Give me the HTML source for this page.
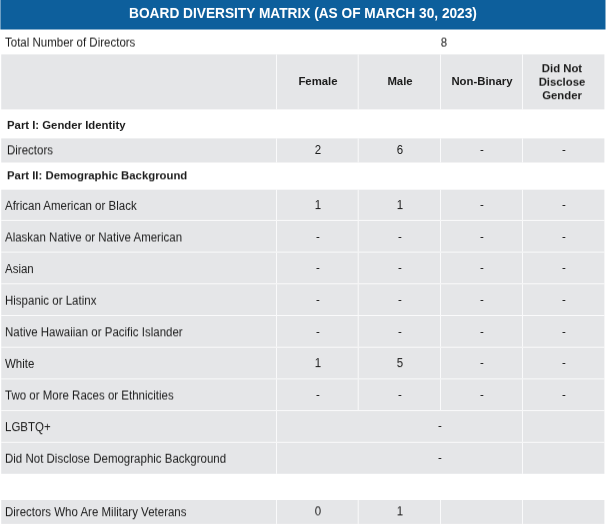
<!DOCTYPE html>
<html><head><meta charset="utf-8"><style>
html,body{margin:0;padding:0;background:#fff;}
body{width:606px;height:526px;position:relative;overflow:hidden;font-family:"Liberation Sans",sans-serif;}
.r{position:absolute;}
.t{position:absolute;white-space:nowrap;line-height:1.117;will-change:transform;}
</style></head><body>
<div class="r" style="left:1px;top:0px;width:604px;height:29px;background:rgba(13,95,156,1.000)"></div>
<div class="r" style="left:0px;top:0px;width:1px;height:29px;background:rgba(13,95,156,0.600)"></div>
<div class="r" style="left:605px;top:0px;width:1px;height:29px;background:rgba(13,95,156,0.500)"></div>
<div class="r" style="left:1px;top:29px;width:604px;height:1px;background:rgba(13,95,156,0.500)"></div>
<div class="r" style="left:0px;top:29px;width:1px;height:1px;background:rgba(13,95,156,0.300)"></div>
<div class="r" style="left:605px;top:29px;width:1px;height:1px;background:rgba(13,95,156,0.250)"></div>
<div class="t" style="top:5px;left:53px;font-size:13.7px;color:#ffffff;font-weight:bold;width:500px;text-align:center;transform:translate(0px,0.602px) rotate(0.01deg) scaleY(1.13);transform-origin:50% 12.4px;">BOARD DIVERSITY MATRIX (AS OF MARCH 30, 2023)</div>
<div class="t" style="top:35px;left:5px;font-size:11.5px;color:#1a1a1a;transform:translate(0px,0.693px) rotate(0.01deg) scaleY(1.05);transform-origin:0 2.17px;">Total Number of Directors</div>
<div class="t" style="top:35px;left:424px;font-size:11.5px;color:#1a1a1a;width:40px;text-align:center;transform:translate(0px,0.693px) rotate(0.01deg) scaleY(1.05);transform-origin:0 2.17px;">8</div>
<div class="r" style="left:2px;top:55px;width:602px;height:54px;background:rgba(229,230,232,1.000)"></div>
<div class="r" style="left:1px;top:55px;width:1px;height:54px;background:rgba(229,230,232,0.800)"></div>
<div class="r" style="left:604px;top:55px;width:1px;height:54px;background:rgba(229,230,232,0.400)"></div>
<div class="r" style="left:2px;top:54px;width:602px;height:1px;background:rgba(229,230,232,0.600)"></div>
<div class="r" style="left:2px;top:109px;width:602px;height:1px;background:rgba(229,230,232,0.400)"></div>
<div class="r" style="left:1px;top:54px;width:1px;height:1px;background:rgba(229,230,232,0.480)"></div>
<div class="r" style="left:604px;top:54px;width:1px;height:1px;background:rgba(229,230,232,0.240)"></div>
<div class="r" style="left:1px;top:109px;width:1px;height:1px;background:rgba(229,230,232,0.320)"></div>
<div class="r" style="left:604px;top:109px;width:1px;height:1px;background:rgba(229,230,232,0.160)"></div>
<div class="r" style="left:276px;top:55px;width:1px;height:54px;background:rgba(255,255,255,0.800)"></div>
<div class="r" style="left:276px;top:54px;width:1px;height:1px;background:rgba(255,255,255,0.480)"></div>
<div class="r" style="left:276px;top:109px;width:1px;height:1px;background:rgba(255,255,255,0.320)"></div>
<div class="r" style="left:357px;top:55px;width:1px;height:54px;background:rgba(255,255,255,0.240)"></div>
<div class="r" style="left:358px;top:55px;width:1px;height:54px;background:rgba(255,255,255,0.560)"></div>
<div class="r" style="left:357px;top:54px;width:1px;height:1px;background:rgba(255,255,255,0.144)"></div>
<div class="r" style="left:358px;top:54px;width:1px;height:1px;background:rgba(255,255,255,0.336)"></div>
<div class="r" style="left:357px;top:109px;width:1px;height:1px;background:rgba(255,255,255,0.096)"></div>
<div class="r" style="left:358px;top:109px;width:1px;height:1px;background:rgba(255,255,255,0.224)"></div>
<div class="r" style="left:440px;top:55px;width:1px;height:54px;background:rgba(255,255,255,0.800)"></div>
<div class="r" style="left:440px;top:54px;width:1px;height:1px;background:rgba(255,255,255,0.480)"></div>
<div class="r" style="left:440px;top:109px;width:1px;height:1px;background:rgba(255,255,255,0.320)"></div>
<div class="r" style="left:522px;top:55px;width:1px;height:54px;background:rgba(255,255,255,0.800)"></div>
<div class="r" style="left:522px;top:54px;width:1px;height:1px;background:rgba(255,255,255,0.480)"></div>
<div class="r" style="left:522px;top:109px;width:1px;height:1px;background:rgba(255,255,255,0.320)"></div>
<div class="t" style="top:75px;left:278px;font-size:11.35px;color:#1a1a1a;font-weight:bold;width:80px;text-align:center;transform:translate(0px,0.028px) rotate(0.01deg) ;">Female</div>
<div class="t" style="top:75px;left:360px;font-size:11.35px;color:#1a1a1a;font-weight:bold;width:80px;text-align:center;transform:translate(0px,0.028px) rotate(0.01deg) ;">Male</div>
<div class="t" style="top:75px;left:442px;font-size:11.35px;color:#1a1a1a;font-weight:bold;width:80px;text-align:center;transform:translate(0px,0.028px) rotate(0.01deg) ;">Non-Binary</div>
<div class="t" style="top:62px;left:522px;font-size:11.35px;color:#1a1a1a;font-weight:bold;width:80px;text-align:center;transform:translate(0px,0.228px) rotate(0.01deg) ;">Did Not</div>
<div class="t" style="top:75px;left:522px;font-size:11.35px;color:#1a1a1a;font-weight:bold;width:80px;text-align:center;transform:translate(0px,0.728px) rotate(0.01deg) ;">Disclose</div>
<div class="t" style="top:89px;left:522px;font-size:11.35px;color:#1a1a1a;font-weight:bold;width:80px;text-align:center;transform:translate(0px,0.228px) rotate(0.01deg) ;">Gender</div>
<div class="t" style="top:118px;left:7px;font-size:11.35px;color:#1a1a1a;font-weight:bold;transform:translate(0px,0.928px) rotate(0.01deg) ;">Part I: Gender Identity</div>
<div class="r" style="left:2px;top:139px;width:602px;height:23px;background:rgba(229,230,232,1.000)"></div>
<div class="r" style="left:1px;top:139px;width:1px;height:23px;background:rgba(229,230,232,0.800)"></div>
<div class="r" style="left:604px;top:139px;width:1px;height:23px;background:rgba(229,230,232,0.400)"></div>
<div class="r" style="left:2px;top:138px;width:602px;height:1px;background:rgba(229,230,232,0.600)"></div>
<div class="r" style="left:2px;top:162px;width:602px;height:1px;background:rgba(229,230,232,0.500)"></div>
<div class="r" style="left:1px;top:138px;width:1px;height:1px;background:rgba(229,230,232,0.480)"></div>
<div class="r" style="left:604px;top:138px;width:1px;height:1px;background:rgba(229,230,232,0.240)"></div>
<div class="r" style="left:1px;top:162px;width:1px;height:1px;background:rgba(229,230,232,0.400)"></div>
<div class="r" style="left:604px;top:162px;width:1px;height:1px;background:rgba(229,230,232,0.200)"></div>
<div class="r" style="left:276px;top:139px;width:1px;height:23px;background:rgba(255,255,255,0.800)"></div>
<div class="r" style="left:276px;top:138px;width:1px;height:1px;background:rgba(255,255,255,0.480)"></div>
<div class="r" style="left:276px;top:162px;width:1px;height:1px;background:rgba(255,255,255,0.400)"></div>
<div class="r" style="left:357px;top:139px;width:1px;height:23px;background:rgba(255,255,255,0.240)"></div>
<div class="r" style="left:358px;top:139px;width:1px;height:23px;background:rgba(255,255,255,0.560)"></div>
<div class="r" style="left:357px;top:138px;width:1px;height:1px;background:rgba(255,255,255,0.144)"></div>
<div class="r" style="left:358px;top:138px;width:1px;height:1px;background:rgba(255,255,255,0.336)"></div>
<div class="r" style="left:357px;top:162px;width:1px;height:1px;background:rgba(255,255,255,0.120)"></div>
<div class="r" style="left:358px;top:162px;width:1px;height:1px;background:rgba(255,255,255,0.280)"></div>
<div class="r" style="left:440px;top:139px;width:1px;height:23px;background:rgba(255,255,255,0.800)"></div>
<div class="r" style="left:440px;top:138px;width:1px;height:1px;background:rgba(255,255,255,0.480)"></div>
<div class="r" style="left:440px;top:162px;width:1px;height:1px;background:rgba(255,255,255,0.400)"></div>
<div class="r" style="left:522px;top:139px;width:1px;height:23px;background:rgba(255,255,255,0.800)"></div>
<div class="r" style="left:522px;top:138px;width:1px;height:1px;background:rgba(255,255,255,0.480)"></div>
<div class="r" style="left:522px;top:162px;width:1px;height:1px;background:rgba(255,255,255,0.400)"></div>
<div class="t" style="top:143px;left:7px;font-size:11.5px;color:#1a1a1a;transform:translate(0px,0.492px) rotate(0.01deg) scaleY(1.05);transform-origin:0 2.17px;">Directors</div>
<div class="t" style="top:143px;left:288px;font-size:11.5px;color:#1a1a1a;width:60px;text-align:center;transform:translate(0px,0.092px) rotate(0.01deg) scaleY(1.05);transform-origin:0 2.17px;">2</div>
<div class="t" style="top:143px;left:370px;font-size:11.5px;color:#1a1a1a;width:60px;text-align:center;transform:translate(0px,0.092px) rotate(0.01deg) scaleY(1.05);transform-origin:0 2.17px;">6</div>
<div class="t" style="top:143px;left:452px;font-size:11.5px;color:#000000;width:60px;text-align:center;transform:translateZ(0);">-</div>
<div class="t" style="top:143px;left:534px;font-size:11.5px;color:#000000;width:60px;text-align:center;transform:translateZ(0);">-</div>
<div class="t" style="top:169px;left:7px;font-size:11.35px;color:#1a1a1a;font-weight:bold;transform:translate(0px,0.328px) rotate(0.01deg) ;">Part II: Demographic Background</div>
<div class="r" style="left:2px;top:190px;width:602px;height:283px;background:rgba(229,230,232,1.000)"></div>
<div class="r" style="left:1px;top:190px;width:1px;height:283px;background:rgba(229,230,232,0.800)"></div>
<div class="r" style="left:604px;top:190px;width:1px;height:283px;background:rgba(229,230,232,0.400)"></div>
<div class="r" style="left:2px;top:189px;width:602px;height:1px;background:rgba(229,230,232,0.300)"></div>
<div class="r" style="left:2px;top:473px;width:602px;height:1px;background:rgba(229,230,232,0.800)"></div>
<div class="r" style="left:1px;top:189px;width:1px;height:1px;background:rgba(229,230,232,0.240)"></div>
<div class="r" style="left:604px;top:189px;width:1px;height:1px;background:rgba(229,230,232,0.120)"></div>
<div class="r" style="left:1px;top:473px;width:1px;height:1px;background:rgba(229,230,232,0.640)"></div>
<div class="r" style="left:604px;top:473px;width:1px;height:1px;background:rgba(229,230,232,0.320)"></div>
<div class="r" style="left:2px;top:219px;width:602px;height:1px;background:rgba(255,255,255,0.080)"></div>
<div class="r" style="left:2px;top:220px;width:602px;height:1px;background:rgba(255,255,255,0.720)"></div>
<div class="r" style="left:1px;top:219px;width:1px;height:1px;background:rgba(255,255,255,0.064)"></div>
<div class="r" style="left:604px;top:219px;width:1px;height:1px;background:rgba(255,255,255,0.032)"></div>
<div class="r" style="left:1px;top:220px;width:1px;height:1px;background:rgba(255,255,255,0.576)"></div>
<div class="r" style="left:604px;top:220px;width:1px;height:1px;background:rgba(255,255,255,0.288)"></div>
<div class="r" style="left:2px;top:251px;width:602px;height:1px;background:rgba(255,255,255,0.320)"></div>
<div class="r" style="left:2px;top:252px;width:602px;height:1px;background:rgba(255,255,255,0.480)"></div>
<div class="r" style="left:1px;top:251px;width:1px;height:1px;background:rgba(255,255,255,0.256)"></div>
<div class="r" style="left:604px;top:251px;width:1px;height:1px;background:rgba(255,255,255,0.128)"></div>
<div class="r" style="left:1px;top:252px;width:1px;height:1px;background:rgba(255,255,255,0.384)"></div>
<div class="r" style="left:604px;top:252px;width:1px;height:1px;background:rgba(255,255,255,0.192)"></div>
<div class="r" style="left:2px;top:283px;width:602px;height:1px;background:rgba(255,255,255,0.560)"></div>
<div class="r" style="left:2px;top:284px;width:602px;height:1px;background:rgba(255,255,255,0.240)"></div>
<div class="r" style="left:1px;top:283px;width:1px;height:1px;background:rgba(255,255,255,0.448)"></div>
<div class="r" style="left:604px;top:283px;width:1px;height:1px;background:rgba(255,255,255,0.224)"></div>
<div class="r" style="left:1px;top:284px;width:1px;height:1px;background:rgba(255,255,255,0.192)"></div>
<div class="r" style="left:604px;top:284px;width:1px;height:1px;background:rgba(255,255,255,0.096)"></div>
<div class="r" style="left:2px;top:315px;width:602px;height:1px;background:rgba(255,255,255,0.800)"></div>
<div class="r" style="left:1px;top:315px;width:1px;height:1px;background:rgba(255,255,255,0.640)"></div>
<div class="r" style="left:604px;top:315px;width:1px;height:1px;background:rgba(255,255,255,0.320)"></div>
<div class="r" style="left:2px;top:346px;width:602px;height:1px;background:rgba(255,255,255,0.240)"></div>
<div class="r" style="left:2px;top:347px;width:602px;height:1px;background:rgba(255,255,255,0.560)"></div>
<div class="r" style="left:1px;top:346px;width:1px;height:1px;background:rgba(255,255,255,0.192)"></div>
<div class="r" style="left:604px;top:346px;width:1px;height:1px;background:rgba(255,255,255,0.096)"></div>
<div class="r" style="left:1px;top:347px;width:1px;height:1px;background:rgba(255,255,255,0.448)"></div>
<div class="r" style="left:604px;top:347px;width:1px;height:1px;background:rgba(255,255,255,0.224)"></div>
<div class="r" style="left:2px;top:378px;width:602px;height:1px;background:rgba(255,255,255,0.480)"></div>
<div class="r" style="left:2px;top:379px;width:602px;height:1px;background:rgba(255,255,255,0.320)"></div>
<div class="r" style="left:1px;top:378px;width:1px;height:1px;background:rgba(255,255,255,0.384)"></div>
<div class="r" style="left:604px;top:378px;width:1px;height:1px;background:rgba(255,255,255,0.192)"></div>
<div class="r" style="left:1px;top:379px;width:1px;height:1px;background:rgba(255,255,255,0.256)"></div>
<div class="r" style="left:604px;top:379px;width:1px;height:1px;background:rgba(255,255,255,0.128)"></div>
<div class="r" style="left:2px;top:410px;width:602px;height:1px;background:rgba(255,255,255,0.720)"></div>
<div class="r" style="left:2px;top:411px;width:602px;height:1px;background:rgba(255,255,255,0.080)"></div>
<div class="r" style="left:1px;top:410px;width:1px;height:1px;background:rgba(255,255,255,0.576)"></div>
<div class="r" style="left:604px;top:410px;width:1px;height:1px;background:rgba(255,255,255,0.288)"></div>
<div class="r" style="left:1px;top:411px;width:1px;height:1px;background:rgba(255,255,255,0.064)"></div>
<div class="r" style="left:604px;top:411px;width:1px;height:1px;background:rgba(255,255,255,0.032)"></div>
<div class="r" style="left:2px;top:441px;width:602px;height:1px;background:rgba(255,255,255,0.160)"></div>
<div class="r" style="left:2px;top:442px;width:602px;height:1px;background:rgba(255,255,255,0.640)"></div>
<div class="r" style="left:1px;top:441px;width:1px;height:1px;background:rgba(255,255,255,0.128)"></div>
<div class="r" style="left:604px;top:441px;width:1px;height:1px;background:rgba(255,255,255,0.064)"></div>
<div class="r" style="left:1px;top:442px;width:1px;height:1px;background:rgba(255,255,255,0.512)"></div>
<div class="r" style="left:604px;top:442px;width:1px;height:1px;background:rgba(255,255,255,0.256)"></div>
<div class="r" style="left:276px;top:190px;width:1px;height:29px;background:rgba(255,255,255,0.800)"></div>
<div class="r" style="left:276px;top:189px;width:1px;height:1px;background:rgba(255,255,255,0.240)"></div>
<div class="r" style="left:276px;top:219px;width:1px;height:1px;background:rgba(255,255,255,0.720)"></div>
<div class="r" style="left:357px;top:190px;width:1px;height:29px;background:rgba(255,255,255,0.240)"></div>
<div class="r" style="left:358px;top:190px;width:1px;height:29px;background:rgba(255,255,255,0.560)"></div>
<div class="r" style="left:357px;top:189px;width:1px;height:1px;background:rgba(255,255,255,0.072)"></div>
<div class="r" style="left:358px;top:189px;width:1px;height:1px;background:rgba(255,255,255,0.168)"></div>
<div class="r" style="left:357px;top:219px;width:1px;height:1px;background:rgba(255,255,255,0.216)"></div>
<div class="r" style="left:358px;top:219px;width:1px;height:1px;background:rgba(255,255,255,0.504)"></div>
<div class="r" style="left:440px;top:190px;width:1px;height:29px;background:rgba(255,255,255,0.800)"></div>
<div class="r" style="left:440px;top:189px;width:1px;height:1px;background:rgba(255,255,255,0.240)"></div>
<div class="r" style="left:440px;top:219px;width:1px;height:1px;background:rgba(255,255,255,0.720)"></div>
<div class="r" style="left:522px;top:190px;width:1px;height:29px;background:rgba(255,255,255,0.800)"></div>
<div class="r" style="left:522px;top:189px;width:1px;height:1px;background:rgba(255,255,255,0.240)"></div>
<div class="r" style="left:522px;top:219px;width:1px;height:1px;background:rgba(255,255,255,0.720)"></div>
<div class="t" style="top:198px;left:5px;font-size:11.5px;color:#1a1a1a;transform:translate(0px,0.992px) rotate(0.01deg) scaleY(1.05);transform-origin:0 2.17px;">African American or Black</div>
<div class="t" style="top:198px;left:288px;font-size:11.5px;color:#1a1a1a;width:60px;text-align:center;transform:translate(0px,0.192px) rotate(0.01deg) scaleY(1.05);transform-origin:0 2.17px;">1</div>
<div class="t" style="top:198px;left:370px;font-size:11.5px;color:#1a1a1a;width:60px;text-align:center;transform:translate(0px,0.192px) rotate(0.01deg) scaleY(1.05);transform-origin:0 2.17px;">1</div>
<div class="t" style="top:198px;left:452px;font-size:11.5px;color:#000000;width:60px;text-align:center;transform:translateZ(0);">-</div>
<div class="t" style="top:198px;left:534px;font-size:11.5px;color:#000000;width:60px;text-align:center;transform:translateZ(0);">-</div>
<div class="r" style="left:276px;top:221px;width:1px;height:30px;background:rgba(255,255,255,0.800)"></div>
<div class="r" style="left:276px;top:220px;width:1px;height:1px;background:rgba(255,255,255,0.080)"></div>
<div class="r" style="left:276px;top:251px;width:1px;height:1px;background:rgba(255,255,255,0.480)"></div>
<div class="r" style="left:357px;top:221px;width:1px;height:30px;background:rgba(255,255,255,0.240)"></div>
<div class="r" style="left:358px;top:221px;width:1px;height:30px;background:rgba(255,255,255,0.560)"></div>
<div class="r" style="left:357px;top:220px;width:1px;height:1px;background:rgba(255,255,255,0.024)"></div>
<div class="r" style="left:358px;top:220px;width:1px;height:1px;background:rgba(255,255,255,0.056)"></div>
<div class="r" style="left:357px;top:251px;width:1px;height:1px;background:rgba(255,255,255,0.144)"></div>
<div class="r" style="left:358px;top:251px;width:1px;height:1px;background:rgba(255,255,255,0.336)"></div>
<div class="r" style="left:440px;top:221px;width:1px;height:30px;background:rgba(255,255,255,0.800)"></div>
<div class="r" style="left:440px;top:220px;width:1px;height:1px;background:rgba(255,255,255,0.080)"></div>
<div class="r" style="left:440px;top:251px;width:1px;height:1px;background:rgba(255,255,255,0.480)"></div>
<div class="r" style="left:522px;top:221px;width:1px;height:30px;background:rgba(255,255,255,0.800)"></div>
<div class="r" style="left:522px;top:220px;width:1px;height:1px;background:rgba(255,255,255,0.080)"></div>
<div class="r" style="left:522px;top:251px;width:1px;height:1px;background:rgba(255,255,255,0.480)"></div>
<div class="t" style="top:230px;left:5px;font-size:11.5px;color:#1a1a1a;transform:translate(0px,0.599px) rotate(0.01deg) scaleY(1.05);transform-origin:0 2.17px;">Alaskan Native or Native American</div>
<div class="t" style="top:230px;left:288px;font-size:11.5px;color:#000000;width:60px;text-align:center;transform:translateZ(0);">-</div>
<div class="t" style="top:230px;left:370px;font-size:11.5px;color:#000000;width:60px;text-align:center;transform:translateZ(0);">-</div>
<div class="t" style="top:230px;left:452px;font-size:11.5px;color:#000000;width:60px;text-align:center;transform:translateZ(0);">-</div>
<div class="t" style="top:230px;left:534px;font-size:11.5px;color:#000000;width:60px;text-align:center;transform:translateZ(0);">-</div>
<div class="r" style="left:276px;top:253px;width:1px;height:30px;background:rgba(255,255,255,0.800)"></div>
<div class="r" style="left:276px;top:252px;width:1px;height:1px;background:rgba(255,255,255,0.320)"></div>
<div class="r" style="left:276px;top:283px;width:1px;height:1px;background:rgba(255,255,255,0.240)"></div>
<div class="r" style="left:357px;top:253px;width:1px;height:30px;background:rgba(255,255,255,0.240)"></div>
<div class="r" style="left:358px;top:253px;width:1px;height:30px;background:rgba(255,255,255,0.560)"></div>
<div class="r" style="left:357px;top:252px;width:1px;height:1px;background:rgba(255,255,255,0.096)"></div>
<div class="r" style="left:358px;top:252px;width:1px;height:1px;background:rgba(255,255,255,0.224)"></div>
<div class="r" style="left:357px;top:283px;width:1px;height:1px;background:rgba(255,255,255,0.072)"></div>
<div class="r" style="left:358px;top:283px;width:1px;height:1px;background:rgba(255,255,255,0.168)"></div>
<div class="r" style="left:440px;top:253px;width:1px;height:30px;background:rgba(255,255,255,0.800)"></div>
<div class="r" style="left:440px;top:252px;width:1px;height:1px;background:rgba(255,255,255,0.320)"></div>
<div class="r" style="left:440px;top:283px;width:1px;height:1px;background:rgba(255,255,255,0.240)"></div>
<div class="r" style="left:522px;top:253px;width:1px;height:30px;background:rgba(255,255,255,0.800)"></div>
<div class="r" style="left:522px;top:252px;width:1px;height:1px;background:rgba(255,255,255,0.320)"></div>
<div class="r" style="left:522px;top:283px;width:1px;height:1px;background:rgba(255,255,255,0.240)"></div>
<div class="t" style="top:262px;left:5px;font-size:11.5px;color:#1a1a1a;transform:translate(0px,0.206px) rotate(0.01deg) scaleY(1.05);transform-origin:0 2.17px;">Asian</div>
<div class="t" style="top:261px;left:288px;font-size:11.5px;color:#000000;width:60px;text-align:center;transform:translateZ(0);">-</div>
<div class="t" style="top:261px;left:370px;font-size:11.5px;color:#000000;width:60px;text-align:center;transform:translateZ(0);">-</div>
<div class="t" style="top:261px;left:452px;font-size:11.5px;color:#000000;width:60px;text-align:center;transform:translateZ(0);">-</div>
<div class="t" style="top:261px;left:534px;font-size:11.5px;color:#000000;width:60px;text-align:center;transform:translateZ(0);">-</div>
<div class="r" style="left:276px;top:285px;width:1px;height:30px;background:rgba(255,255,255,0.800)"></div>
<div class="r" style="left:276px;top:284px;width:1px;height:1px;background:rgba(255,255,255,0.560)"></div>
<div class="r" style="left:357px;top:285px;width:1px;height:30px;background:rgba(255,255,255,0.240)"></div>
<div class="r" style="left:358px;top:285px;width:1px;height:30px;background:rgba(255,255,255,0.560)"></div>
<div class="r" style="left:357px;top:284px;width:1px;height:1px;background:rgba(255,255,255,0.168)"></div>
<div class="r" style="left:358px;top:284px;width:1px;height:1px;background:rgba(255,255,255,0.392)"></div>
<div class="r" style="left:440px;top:285px;width:1px;height:30px;background:rgba(255,255,255,0.800)"></div>
<div class="r" style="left:440px;top:284px;width:1px;height:1px;background:rgba(255,255,255,0.560)"></div>
<div class="r" style="left:522px;top:285px;width:1px;height:30px;background:rgba(255,255,255,0.800)"></div>
<div class="r" style="left:522px;top:284px;width:1px;height:1px;background:rgba(255,255,255,0.560)"></div>
<div class="t" style="top:293px;left:5px;font-size:11.5px;color:#1a1a1a;transform:translate(0px,0.812px) rotate(0.01deg) scaleY(1.05);transform-origin:0 2.17px;">Hispanic or Latinx</div>
<div class="t" style="top:293px;left:288px;font-size:11.5px;color:#000000;width:60px;text-align:center;transform:translateZ(0);">-</div>
<div class="t" style="top:293px;left:370px;font-size:11.5px;color:#000000;width:60px;text-align:center;transform:translateZ(0);">-</div>
<div class="t" style="top:293px;left:452px;font-size:11.5px;color:#000000;width:60px;text-align:center;transform:translateZ(0);">-</div>
<div class="t" style="top:293px;left:534px;font-size:11.5px;color:#000000;width:60px;text-align:center;transform:translateZ(0);">-</div>
<div class="r" style="left:276px;top:316px;width:1px;height:30px;background:rgba(255,255,255,0.800)"></div>
<div class="r" style="left:276px;top:346px;width:1px;height:1px;background:rgba(255,255,255,0.560)"></div>
<div class="r" style="left:357px;top:316px;width:1px;height:30px;background:rgba(255,255,255,0.240)"></div>
<div class="r" style="left:358px;top:316px;width:1px;height:30px;background:rgba(255,255,255,0.560)"></div>
<div class="r" style="left:357px;top:346px;width:1px;height:1px;background:rgba(255,255,255,0.168)"></div>
<div class="r" style="left:358px;top:346px;width:1px;height:1px;background:rgba(255,255,255,0.392)"></div>
<div class="r" style="left:440px;top:316px;width:1px;height:30px;background:rgba(255,255,255,0.800)"></div>
<div class="r" style="left:440px;top:346px;width:1px;height:1px;background:rgba(255,255,255,0.560)"></div>
<div class="r" style="left:522px;top:316px;width:1px;height:30px;background:rgba(255,255,255,0.800)"></div>
<div class="r" style="left:522px;top:346px;width:1px;height:1px;background:rgba(255,255,255,0.560)"></div>
<div class="t" style="top:325px;left:5px;font-size:11.5px;color:#1a1a1a;transform:translate(0px,0.419px) rotate(0.01deg) scaleY(1.05);transform-origin:0 2.17px;">Native Hawaiian or Pacific Islander</div>
<div class="t" style="top:325px;left:288px;font-size:11.5px;color:#000000;width:60px;text-align:center;transform:translateZ(0);">-</div>
<div class="t" style="top:325px;left:370px;font-size:11.5px;color:#000000;width:60px;text-align:center;transform:translateZ(0);">-</div>
<div class="t" style="top:325px;left:452px;font-size:11.5px;color:#000000;width:60px;text-align:center;transform:translateZ(0);">-</div>
<div class="t" style="top:325px;left:534px;font-size:11.5px;color:#000000;width:60px;text-align:center;transform:translateZ(0);">-</div>
<div class="r" style="left:276px;top:348px;width:1px;height:30px;background:rgba(255,255,255,0.800)"></div>
<div class="r" style="left:276px;top:347px;width:1px;height:1px;background:rgba(255,255,255,0.240)"></div>
<div class="r" style="left:276px;top:378px;width:1px;height:1px;background:rgba(255,255,255,0.320)"></div>
<div class="r" style="left:357px;top:348px;width:1px;height:30px;background:rgba(255,255,255,0.240)"></div>
<div class="r" style="left:358px;top:348px;width:1px;height:30px;background:rgba(255,255,255,0.560)"></div>
<div class="r" style="left:357px;top:347px;width:1px;height:1px;background:rgba(255,255,255,0.072)"></div>
<div class="r" style="left:358px;top:347px;width:1px;height:1px;background:rgba(255,255,255,0.168)"></div>
<div class="r" style="left:357px;top:378px;width:1px;height:1px;background:rgba(255,255,255,0.096)"></div>
<div class="r" style="left:358px;top:378px;width:1px;height:1px;background:rgba(255,255,255,0.224)"></div>
<div class="r" style="left:440px;top:348px;width:1px;height:30px;background:rgba(255,255,255,0.800)"></div>
<div class="r" style="left:440px;top:347px;width:1px;height:1px;background:rgba(255,255,255,0.240)"></div>
<div class="r" style="left:440px;top:378px;width:1px;height:1px;background:rgba(255,255,255,0.320)"></div>
<div class="r" style="left:522px;top:348px;width:1px;height:30px;background:rgba(255,255,255,0.800)"></div>
<div class="r" style="left:522px;top:347px;width:1px;height:1px;background:rgba(255,255,255,0.240)"></div>
<div class="r" style="left:522px;top:378px;width:1px;height:1px;background:rgba(255,255,255,0.320)"></div>
<div class="t" style="top:357px;left:5px;font-size:11.5px;color:#1a1a1a;transform:translate(0px,0.026px) rotate(0.01deg) scaleY(1.05);transform-origin:0 2.17px;">White</div>
<div class="t" style="top:356px;left:288px;font-size:11.5px;color:#1a1a1a;width:60px;text-align:center;transform:translate(0px,0.226px) rotate(0.01deg) scaleY(1.05);transform-origin:0 2.17px;">1</div>
<div class="t" style="top:356px;left:370px;font-size:11.5px;color:#1a1a1a;width:60px;text-align:center;transform:translate(0px,0.226px) rotate(0.01deg) scaleY(1.05);transform-origin:0 2.17px;">5</div>
<div class="t" style="top:356px;left:452px;font-size:11.5px;color:#000000;width:60px;text-align:center;transform:translateZ(0);">-</div>
<div class="t" style="top:356px;left:534px;font-size:11.5px;color:#000000;width:60px;text-align:center;transform:translateZ(0);">-</div>
<div class="r" style="left:276px;top:380px;width:1px;height:30px;background:rgba(255,255,255,0.800)"></div>
<div class="r" style="left:276px;top:379px;width:1px;height:1px;background:rgba(255,255,255,0.480)"></div>
<div class="r" style="left:276px;top:410px;width:1px;height:1px;background:rgba(255,255,255,0.080)"></div>
<div class="r" style="left:357px;top:380px;width:1px;height:30px;background:rgba(255,255,255,0.240)"></div>
<div class="r" style="left:358px;top:380px;width:1px;height:30px;background:rgba(255,255,255,0.560)"></div>
<div class="r" style="left:357px;top:379px;width:1px;height:1px;background:rgba(255,255,255,0.144)"></div>
<div class="r" style="left:358px;top:379px;width:1px;height:1px;background:rgba(255,255,255,0.336)"></div>
<div class="r" style="left:357px;top:410px;width:1px;height:1px;background:rgba(255,255,255,0.024)"></div>
<div class="r" style="left:358px;top:410px;width:1px;height:1px;background:rgba(255,255,255,0.056)"></div>
<div class="r" style="left:440px;top:380px;width:1px;height:30px;background:rgba(255,255,255,0.800)"></div>
<div class="r" style="left:440px;top:379px;width:1px;height:1px;background:rgba(255,255,255,0.480)"></div>
<div class="r" style="left:440px;top:410px;width:1px;height:1px;background:rgba(255,255,255,0.080)"></div>
<div class="r" style="left:522px;top:380px;width:1px;height:30px;background:rgba(255,255,255,0.800)"></div>
<div class="r" style="left:522px;top:379px;width:1px;height:1px;background:rgba(255,255,255,0.480)"></div>
<div class="r" style="left:522px;top:410px;width:1px;height:1px;background:rgba(255,255,255,0.080)"></div>
<div class="t" style="top:388px;left:5px;font-size:11.5px;color:#1a1a1a;transform:translate(0px,0.632px) rotate(0.01deg) scaleY(1.05);transform-origin:0 2.17px;">Two or More Races or Ethnicities</div>
<div class="t" style="top:388px;left:288px;font-size:11.5px;color:#000000;width:60px;text-align:center;transform:translateZ(0);">-</div>
<div class="t" style="top:388px;left:370px;font-size:11.5px;color:#000000;width:60px;text-align:center;transform:translateZ(0);">-</div>
<div class="t" style="top:388px;left:452px;font-size:11.5px;color:#000000;width:60px;text-align:center;transform:translateZ(0);">-</div>
<div class="t" style="top:388px;left:534px;font-size:11.5px;color:#000000;width:60px;text-align:center;transform:translateZ(0);">-</div>
<div class="r" style="left:276px;top:412px;width:1px;height:29px;background:rgba(255,255,255,0.800)"></div>
<div class="r" style="left:276px;top:411px;width:1px;height:1px;background:rgba(255,255,255,0.720)"></div>
<div class="r" style="left:276px;top:441px;width:1px;height:1px;background:rgba(255,255,255,0.640)"></div>
<div class="r" style="left:522px;top:412px;width:1px;height:29px;background:rgba(255,255,255,0.800)"></div>
<div class="r" style="left:522px;top:411px;width:1px;height:1px;background:rgba(255,255,255,0.720)"></div>
<div class="r" style="left:522px;top:441px;width:1px;height:1px;background:rgba(255,255,255,0.640)"></div>
<div class="t" style="top:420px;left:5px;font-size:11.5px;color:#1a1a1a;transform:translate(0px,0.239px) rotate(0.01deg) scaleY(1.05);transform-origin:0 2.17px;">LGBTQ+</div>
<div class="t" style="top:419px;left:410px;font-size:11.5px;color:#000000;width:60px;text-align:center;transform:translateZ(0);">-</div>
<div class="r" style="left:276px;top:443px;width:1px;height:30px;background:rgba(255,255,255,0.800)"></div>
<div class="r" style="left:276px;top:442px;width:1px;height:1px;background:rgba(255,255,255,0.160)"></div>
<div class="r" style="left:276px;top:473px;width:1px;height:1px;background:rgba(255,255,255,0.640)"></div>
<div class="r" style="left:522px;top:443px;width:1px;height:30px;background:rgba(255,255,255,0.800)"></div>
<div class="r" style="left:522px;top:442px;width:1px;height:1px;background:rgba(255,255,255,0.160)"></div>
<div class="r" style="left:522px;top:473px;width:1px;height:1px;background:rgba(255,255,255,0.640)"></div>
<div class="t" style="top:451px;left:5px;font-size:11.5px;color:#1a1a1a;transform:translate(0px,0.846px) rotate(0.01deg) scaleY(1.05);transform-origin:0 2.17px;">Did Not Disclose Demographic Background</div>
<div class="t" style="top:451px;left:410px;font-size:11.5px;color:#000000;width:60px;text-align:center;transform:translateZ(0);">-</div>
<div class="r" style="left:2px;top:500px;width:602px;height:23px;background:rgba(229,230,232,1.000)"></div>
<div class="r" style="left:1px;top:500px;width:1px;height:23px;background:rgba(229,230,232,0.800)"></div>
<div class="r" style="left:604px;top:500px;width:1px;height:23px;background:rgba(229,230,232,0.400)"></div>
<div class="r" style="left:2px;top:523px;width:602px;height:1px;background:rgba(229,230,232,0.900)"></div>
<div class="r" style="left:1px;top:523px;width:1px;height:1px;background:rgba(229,230,232,0.720)"></div>
<div class="r" style="left:604px;top:523px;width:1px;height:1px;background:rgba(229,230,232,0.360)"></div>
<div class="r" style="left:276px;top:500px;width:1px;height:23px;background:rgba(255,255,255,0.800)"></div>
<div class="r" style="left:276px;top:523px;width:1px;height:1px;background:rgba(255,255,255,0.720)"></div>
<div class="r" style="left:357px;top:500px;width:1px;height:23px;background:rgba(255,255,255,0.240)"></div>
<div class="r" style="left:358px;top:500px;width:1px;height:23px;background:rgba(255,255,255,0.560)"></div>
<div class="r" style="left:357px;top:523px;width:1px;height:1px;background:rgba(255,255,255,0.216)"></div>
<div class="r" style="left:358px;top:523px;width:1px;height:1px;background:rgba(255,255,255,0.504)"></div>
<div class="r" style="left:440px;top:500px;width:1px;height:23px;background:rgba(255,255,255,0.800)"></div>
<div class="r" style="left:440px;top:523px;width:1px;height:1px;background:rgba(255,255,255,0.720)"></div>
<div class="r" style="left:522px;top:500px;width:1px;height:23px;background:rgba(255,255,255,0.800)"></div>
<div class="r" style="left:522px;top:523px;width:1px;height:1px;background:rgba(255,255,255,0.720)"></div>
<div class="t" style="top:505px;left:5px;font-size:11.5px;color:#1a1a1a;transform:translate(0px,0.292px) rotate(0.01deg) scaleY(1.05);transform-origin:0 2.17px;">Directors Who Are Military Veterans</div>
<div class="t" style="top:504px;left:288px;font-size:11.5px;color:#1a1a1a;width:60px;text-align:center;transform:translate(0px,0.493px) rotate(0.01deg) scaleY(1.05);transform-origin:0 2.17px;">0</div>
<div class="t" style="top:504px;left:370px;font-size:11.5px;color:#1a1a1a;width:60px;text-align:center;transform:translate(0px,0.493px) rotate(0.01deg) scaleY(1.05);transform-origin:0 2.17px;">1</div>
</body></html>
